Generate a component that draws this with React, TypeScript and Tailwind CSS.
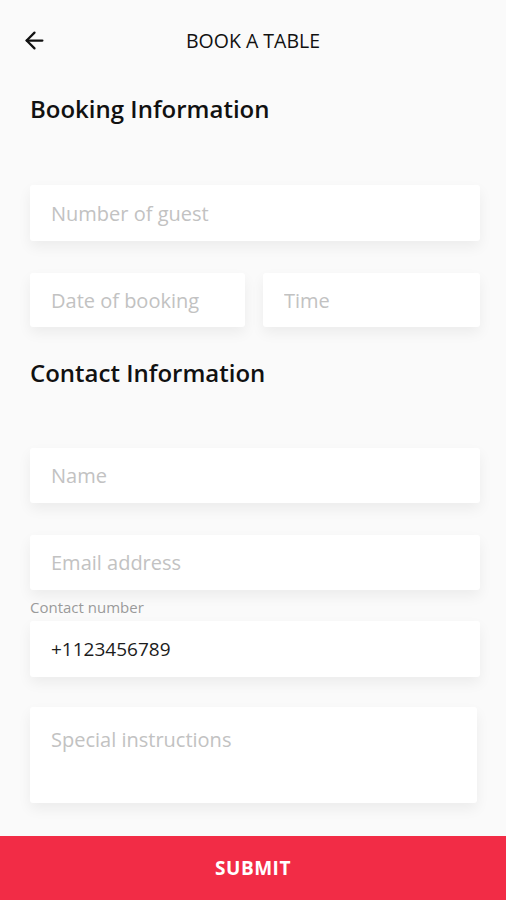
import { ArrowLeft } from "lucide-react";

const field =
  "w-full h-14 bg-white rounded-[3px] px-[21px] text-[20px] text-[#1c1c1c] placeholder:text-[#c2c2c2] outline-none shadow-[0_6px_14px_rgba(0,0,0,0.06)]";

export default function App() {
  return (
    <div
      className="w-[506px] h-[900px] bg-[#fafafa] flex flex-col overflow-hidden"
      style={{ fontFamily: "'Open Sans', 'Noto Sans', sans-serif" }}
    >
      <header className="relative h-[82px] flex items-center justify-center">
        <button className="absolute left-[21px] top-[27px] text-[#111]">
          <ArrowLeft size={27} strokeWidth={2} />
        </button>
        <h1 className="text-[19.5px] font-medium text-[#111] -mt-[1px]">BOOK A TABLE</h1>
      </header>

      <main className="flex-1 px-[30px] pr-[26px]">
        <h2 className="text-[24px] font-semibold text-[#111] leading-none mt-[15px]">Booking Information</h2>

        <input className={`${field} mt-[64px]`} placeholder="Number of guest" />
        <div className="flex gap-[18px] mt-[32px]">
          <input className={`${field} !w-[215px] h-[54px]`} placeholder="Date of booking" />
          <input className={`${field} flex-1 h-[54px]`} placeholder="Time" />
        </div>

        <h2 className="text-[24px] font-semibold text-[#111] leading-none mt-[34px]">Contact Information</h2>

        <input className={`${field} h-[55px] mt-[63px]`} placeholder="Name" />
        <input className={`${field} h-[55px] mt-[32px]`} placeholder="Email address" />
        <label className="block text-[15px] text-[#9a9a9a] mt-[10px] leading-none">Contact number</label>
        <input className={`${field} !text-[19px] mt-[6px]`} defaultValue="+1123456789" />

        <textarea
          className={`${field} !w-[447px] h-[96px] mt-[30px] pt-[18px] resize-none block`}
          placeholder="Special instructions"
        />
      </main>

      <button className="h-[64px] w-full bg-[#f22c46] text-white text-[19px] font-bold tracking-[0.5px]">
        SUBMIT
      </button>
    </div>
  );
}
